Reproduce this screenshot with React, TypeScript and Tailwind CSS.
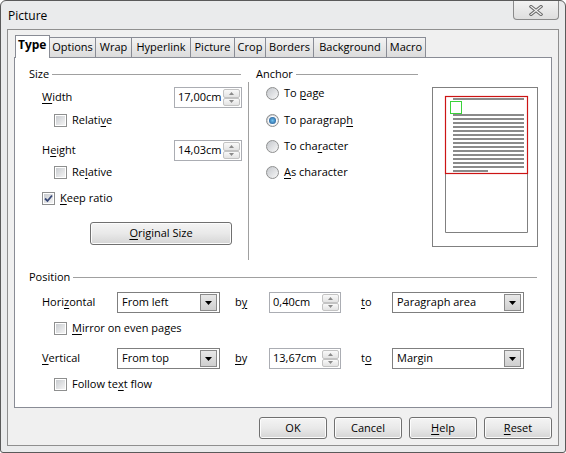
import React from 'react'

const FONT = "font-['Open_Sans','Noto_Sans',sans-serif]"

function Checkbox({ checked, children }: { checked?: boolean; children: React.ReactNode }) {
  return (
    <div className="flex items-center h-[14px]">
      <span className="w-[13px] h-[13px] border border-[#8e8f8f] bg-white p-px shrink-0">
        <span className="flex w-full h-full items-center justify-center bg-linear-to-br from-[#c9ccd0] to-[#f4f4f4]">
          {checked && (
            <svg width="9" height="9" viewBox="0 0 9 9">
              <path d="M1 4.5 L3.5 7 L8 1.5" fill="none" stroke="#3a4a78" strokeWidth="1.8" />
            </svg>
          )}
        </span>
      </span>
      <span className="ml-[5px] leading-none pb-[2px]">{children}</span>
    </div>
  )
}

function Radio({ checked, children }: { checked?: boolean; children: React.ReactNode }) {
  return (
    <div className="flex items-center h-[16px]">
      <span className="w-[13px] h-[13px] rounded-full border border-[#8e8f8f] bg-linear-to-br from-[#c4c7cc] to-[#f8f8f8] flex items-center justify-center shrink-0">
        {checked && (
          <span className="w-[7px] h-[7px] rounded-full bg-radial from-[#6fc2f0] to-[#1b4f8c] ring-1 ring-white" />
        )}
      </span>
      <span className="ml-[5px] leading-none pb-[2px]">{children}</span>
    </div>
  )
}

function SpinArrow({ up }: { up?: boolean }) {
  return (
    <span className="flex-1 flex items-center justify-center border border-[#c3c3c3] rounded-[2px] bg-linear-to-b from-[#f9f9f9] to-[#e3e3e3]">
      <svg width="5" height="3" viewBox="0 0 5 3">
        <path d={up ? 'M0 3 L2.5 0 L5 3 Z' : 'M0 0 L2.5 3 L5 0 Z'} fill="#8a8a8a" />
      </svg>
    </span>
  )
}

function SpinField({ value, width }: { value: string; width: string }) {
  return (
    <div className={`flex items-center h-[21px] border border-[#abadb3] bg-white pl-[3px] pr-px ${width}`}>
      <span className="flex-1 leading-none pb-[2px]">{value}</span>
      <span className="flex flex-col w-[17px] h-[19px] py-px">
        <SpinArrow up />
        <SpinArrow />
      </span>
    </div>
  )
}

function Dropdown({ value, width }: { value: string; width: string }) {
  return (
    <div className={`flex items-center h-[21px] border border-[#7f7f7f] bg-white pl-[4px] pr-px ${width}`}>
      <span className="flex-1 leading-none pb-[2px]">{value}</span>
      <span className="w-[17px] h-[17px] mr-px flex items-center justify-center border border-[#8a8a8a] bg-linear-to-b from-[#e8e8e8] to-[#cfcfcf]">
        <svg width="7" height="4" viewBox="0 0 7 4">
          <path d="M0 0 L3.5 4 L7 0 Z" fill="#000" />
        </svg>
      </span>
    </div>
  )
}

function Button({ children, className = '' }: { children: React.ReactNode; className?: string }) {
  return (
    <div
      className={`flex items-center justify-center h-[22px] border border-[#707070] rounded-[3px] bg-linear-to-b from-[#f4f4f4] via-[#e9e9e9] to-[#d5d5d5] shadow-[inset_0_0_0_1px_#fcfcfc] ${className}`}
    >
      <span className="leading-none pb-[2px]">{children}</span>
    </div>
  )
}

function GroupHeader({ title, className = '' }: { title: string; className?: string }) {
  return (
    <div className={`flex items-center h-[16px] ${className}`}>
      <span className="leading-none pb-[2px]">{title}</span>
      <span className="flex-1 h-px bg-[#a0a0a0] ml-[3px] shadow-[0_1px_0_#ffffff]" />
    </div>
  )
}

function Label({ children, className = '' }: { children: React.ReactNode; className?: string }) {
  return <span className={`leading-none pb-[2px] ${className}`}>{children}</span>
}

function Preview() {
  const lines = Array.from({ length: 14 }, (_, i) => 27 + i * 4)
  return (
    <svg width="106" height="160" viewBox="0 0 106 160">
      <rect x="0.5" y="0.5" width="105" height="159" fill="#fff" stroke="#808080" />
      <path d="M13.5 86 V145.5 H95.5 V86" fill="none" stroke="#808080" />
      <rect x="21" y="11" width="71" height="2" fill="#8a8a8a" />
      {lines.map((y) => (
        <rect key={y} x="21" y={y} width="71" height="2" fill="#8a8a8a" />
      ))}
      <rect x="21" y="83" width="35" height="2" fill="#8a8a8a" />
      <rect x="13.5" y="9.5" width="82" height="77" fill="none" stroke="#cc1414" strokeWidth="1.2" />
      <rect x="18.5" y="14.5" width="11" height="12" fill="#fff" stroke="#3ad23a" />
    </svg>
  )
}

const tabs = [
  { label: 'Options', w: 'w-[47px]' },
  { label: 'Wrap', w: 'w-[37px]' },
  { label: 'Hyperlink', w: 'w-[60px]' },
  { label: 'Picture', w: 'w-[45px]' },
  { label: 'Crop', w: 'w-[32px]' },
  { label: 'Borders', w: 'w-[49px]' },
  { label: 'Background', w: 'w-[74px]' },
  { label: 'Macro', w: 'w-[40px]' },
]

const u = 'underline-offset-2'

export default function App() {
  return (
    <div className={`${FONT} text-[11px] text-black w-[566px] h-[453px] bg-[#eaebec] border border-[#5a5a5a] rounded-t-[6px] rounded-b-[3px] flex flex-col overflow-hidden`}>
      {/* title bar */}
      <div className="flex h-[28px] shrink-0">
        <span className="pl-[7px] pt-[9px] text-[12px] leading-none">Picture</span>
        <span className="ml-auto mr-[6px] w-[46px] h-[19px] border border-t-0 border-[#8a8a8a] rounded-b-[4px] bg-linear-to-b from-[#f2f2f2] to-[#dedede] flex items-center justify-center">
          <svg width="14" height="11" viewBox="0 0 14 11">
            <path d="M2 1.5 L12 9.5 M12 1.5 L2 9.5" stroke="#6b6b6b" strokeWidth="3.2" strokeLinecap="square" />
            <path d="M2 1.5 L12 9.5 M12 1.5 L2 9.5" stroke="#f4f4f4" strokeWidth="1.2" strokeLinecap="square" />
          </svg>
        </span>
      </div>

      {/* client area */}
      <div className="mx-[6px] h-[417px] border border-[#8f8f8f] bg-[#f0f0f0] pl-[6px] pr-[6px]">
        {/* tabs */}
        <div className="flex items-end h-[27px] pl-px">
          <div className="relative z-10 -mb-px w-[35px] h-[23px] bg-white border border-b-0 border-[#898c95] pl-[2px] pt-[3px] font-bold text-[12px] leading-none">
            Type
          </div>
          {tabs.map((t) => (
            <div
              key={t.label}
              className={`${t.w} h-[20px] -ml-px border border-b-0 border-[#898c95] bg-linear-to-b from-[#f3f3f3] to-[#dcdcdc] flex items-center justify-center`}
            >
              <Label>{t.label}</Label>
            </div>
          ))}
        </div>

        {/* tab page */}
        <div className="w-[538px] h-[351px] bg-white border border-[#898c95]">
          <div className="flex h-[211px]">
            {/* size */}
            <div className="w-[233px] flex flex-col">
              <GroupHeader title="Size" className="mt-[8px] pl-[14px] mr-[7px]" />
              <div className="flex items-center h-[21px] mt-[5px] pl-[27px] pr-[6px]">
                <Label className="flex-1"><u className={u}>W</u>idth</Label>
                <SpinField value="17,00cm" width="w-[68px]" />
              </div>
              <div className="mt-[5px] pl-[39px]">
                <Checkbox>Relati<u className={u}>v</u>e</Checkbox>
              </div>
              <div className="flex items-center h-[21px] mt-[13px] pl-[27px] pr-[6px]">
                <Label className="flex-1">H<u className={u}>e</u>ight</Label>
                <SpinField value="14,03cm" width="w-[68px]" />
              </div>
              <div className="mt-[4px] pl-[39px]">
                <Checkbox>Re<u className={u}>l</u>ative</Checkbox>
              </div>
              <div className="mt-[12px] pl-[27px]">
                <Checkbox checked><u className={u}>K</u>eep ratio</Checkbox>
              </div>
              <Button className="mt-[17px] ml-[75px] w-[142px] h-[23px]">
                <u className={u}>O</u>riginal Size
              </Button>
            </div>

            {/* separator */}
            <div className="w-px mt-[24px] h-[178px] bg-[#a0a0a0] shadow-[1px_0_0_#ffffff]" />

            {/* anchor */}
            <div className="flex">
              <div className="w-[183px] flex flex-col">
                <GroupHeader title="Anchor" className="mt-[8px] pl-[7px] mr-[14px]" />
                <div className="flex flex-col gap-[10px] mt-[3px] pl-[17px]">
                  <Radio>To <u className={u}>p</u>age</Radio>
                  <div className="mt-px">
                    <Radio checked>To paragrap<u className={u}>h</u></Radio>
                  </div>
                  <Radio>To cha<u className={u}>r</u>acter</Radio>
                  <Radio><u className={u}>A</u>s character</Radio>
                </div>
              </div>
              <div className="mt-[29px]">
                <Preview />
              </div>
            </div>
          </div>

          {/* position */}
          <GroupHeader title="Position" className="pl-[14px] mr-[14px]" />
          <div className="flex items-center h-[21px] mt-[7px] pl-[27px]">
            <Label className="w-[75px]">Hori<u className={u}>z</u>ontal</Label>
            <Dropdown value="From left" width="w-[103px]" />
            <Label className="w-[34px] pl-[15px] box-content">b<u className={u}>y</u></Label>
            <SpinField value="0,40cm" width="w-[72px]" />
            <Label className="w-[31px] pl-[20px] box-content"><u className={u}>t</u>o</Label>
            <Dropdown value="Paragraph area" width="w-[132px]" />
          </div>
          <div className="mt-[8px] pl-[39px]">
            <Checkbox><u className={u}>M</u>irror on even pages</Checkbox>
          </div>
          <div className="flex items-center h-[21px] mt-[13px] pl-[27px]">
            <Label className="w-[75px]"><u className={u}>V</u>ertical</Label>
            <Dropdown value="From top" width="w-[103px]" />
            <Label className="w-[34px] pl-[15px] box-content"><u className={u}>b</u>y</Label>
            <SpinField value="13,67cm" width="w-[72px]" />
            <Label className="w-[31px] pl-[20px] box-content">t<u className={u}>o</u></Label>
            <Dropdown value="Margin" width="w-[132px]" />
          </div>
          <div className="mt-[8px] pl-[39px]">
            <Checkbox>Follow te<u className={u}>x</u>t flow</Checkbox>
          </div>
        </div>

        {/* buttons */}
        <div className="flex justify-end gap-[7px] mt-[9px] w-[538px]">
          <Button className="w-[68px]">OK</Button>
          <Button className="w-[68px]">Cancel</Button>
          <Button className="w-[68px]"><u className={u}>H</u>elp</Button>
          <Button className="w-[68px]"><u className={u}>R</u>eset</Button>
        </div>
      </div>
    </div>
  )
}
